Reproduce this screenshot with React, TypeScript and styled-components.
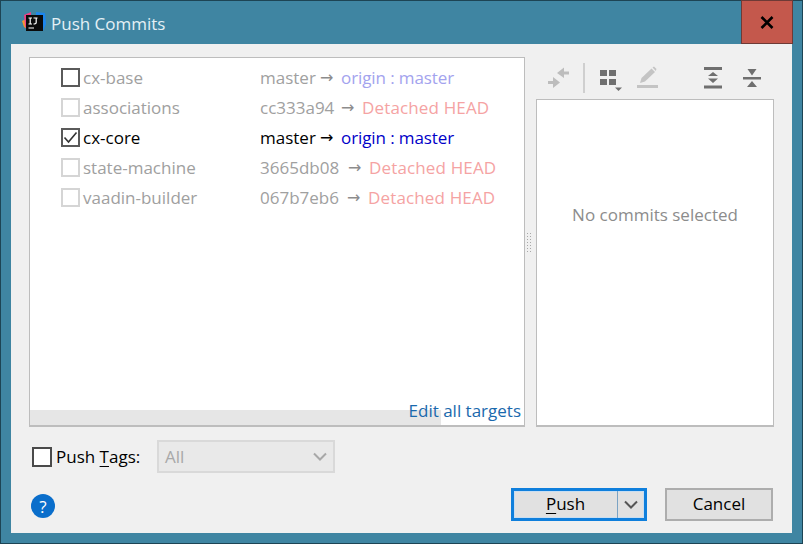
import styled, { createGlobalStyle } from "styled-components";

const GlobalStyle = createGlobalStyle`
    html, body {
        margin: 0;
        padding: 0;
        background: #3f85a2;
    }
    * {
        box-sizing: border-box;
    }
`;

const Dialog = styled.div`
    width: 803px;
    height: 544px;
    display: flex;
    flex-direction: column;
    background: #3f85a2;
    border: 1px solid #1d4454;
    font-family: "Open Sans", "Noto Sans", sans-serif;
    font-size: 17px;
    color: #000;
`;

const TitleBar = styled.div`
    height: 43px;
    display: flex;
    align-items: flex-start;
    padding-left: 21px;
    flex-shrink: 0;
`;

const AppIcon = styled.svg`
    width: 24px;
    height: 24px;
    margin-top: 11px;
    flex-shrink: 0;
`;

const Title = styled.div`
    margin-left: 5px;
    margin-top: 11px;
    color: #e4f0f5;
    font-size: 17px;
    line-height: 24px;
`;

const CloseButton = styled.div`
    width: 52px;
    height: 44px;
    margin-left: auto;
    margin-top: -1px;
    margin-right: 9px;
    background: #c4584c;
    border: 1px solid #6e3a36;
    display: flex;
    align-items: center;
    justify-content: center;
`;

const Content = styled.div`
    flex: 1;
    margin: 0 10px 10px;
    background: #f0f0f0;
    padding: 13px 18px 0;
    display: flex;
    flex-direction: column;
`;

const Split = styled.div`
    display: flex;
    height: 370px;
`;

const ListPanel = styled.div`
    width: 496px;
    background: #fff;
    border: 1px solid #bdbdbd;
    border-bottom-width: 2px;
    display: flex;
    flex-direction: column;
    position: relative;
    padding-top: 4px;
`;

const Row = styled.div`
    height: 30px;
    display: flex;
    align-items: center;
    padding-left: 31px;
    white-space: nowrap;
`;

const Check = styled.span<{ $state: "on" | "off" | "disabled" }>`
    width: 19px;
    height: 19px;
    flex-shrink: 0;
    background: #fff;
    border: 2px solid ${(p) => (p.$state === "disabled" ? "#d5d5d5" : "#5a5a5a")};
    display: flex;
    align-items: center;
    justify-content: center;
`;

const Name = styled.span<{ $active?: boolean }>`
    width: 177px;
    margin-left: 3px;
    color: ${(p) => (p.$active ? "#000" : "#a0a0a0")};
`;

const Branch = styled.span<{ $active?: boolean; $width: number }>`
    width: ${(p) => p.$width}px;
    color: ${(p) => (p.$active ? "#000" : "#a0a0a0")};
`;

const Arrow = styled.span<{ $active?: boolean }>`
    width: 27px;
    padding-left: 6px;
    font-family: "DejaVu Sans", sans-serif;
    font-size: 16px;
    color: ${(p) => (p.$active ? "#000" : "#8c8c8c")};
`;

const Remote = styled.span<{ $active?: boolean }>`
    letter-spacing: -0.1px;
    color: ${(p) => (p.$active ? "#0000c8" : "#a3a3ee")};
`;

const Detached = styled.span`
    letter-spacing: 0.15px;
    color: #f5a3a3;
`;

const Spacer = styled.div`
    flex: 1;
`;

const ScrollTrack = styled.div`
    height: 15px;
    width: 411px;
    background: #e6e6e6;
`;

const EditLink = styled.a`
    position: absolute;
    right: 3px;
    bottom: 2px;
    line-height: 24px;
    color: #1a69ad;
`;

const Divider = styled.div`
    width: 11px;
    display: flex;
    align-items: center;
    justify-content: center;
`;

const Grip = styled.div`
    width: 5px;
    height: 20px;
    margin-right: 5px;
    background-image: radial-gradient(#a8a8a8 0.8px, transparent 1px);
    background-size: 3px 3px;
`;

const SidePanel = styled.div`
    width: 238px;
    display: flex;
    flex-direction: column;
`;

const Toolbar = styled.div`
    height: 42px;
    display: flex;
    align-items: center;
    padding-left: 11px;
    flex-shrink: 0;
`;

const ToolIcon = styled.svg<{ $gap?: number }>`
    width: 26px;
    height: 26px;
    margin-left: ${(p) => p.$gap ?? 0}px;
    flex-shrink: 0;
`;

const ToolSep = styled.div`
    width: 2px;
    height: 30px;
    background: #cfcfcf;
    margin-left: 10px;
`;

const CommitsPane = styled.div`
    flex: 1;
    background: #fff;
    border: 1px solid #bdbdbd;
    border-bottom-width: 2px;
    display: flex;
    align-items: center;
    justify-content: center;
    padding-bottom: 97px;
    color: #8c8c8c;
`;

const TagsRow = styled.div`
    height: 33px;
    margin-top: 13px;
    display: flex;
    align-items: center;
    padding-left: 3px;
`;

const TagsCheck = styled.span`
    width: 20px;
    height: 20px;
    background: #fff;
    border: 2px solid #4a4a4a;
`;

const TagsLabel = styled.span`
    margin-left: 4px;
    width: 101px;
`;

const Mnemonic = styled.span`
    text-decoration: underline;
    text-underline-offset: 3px;
`;

const Select = styled.div`
    width: 178px;
    height: 33px;
    background: #e9e9e9;
    border: 2px solid #d9d9d9;
    color: #a8a8a8;
    display: flex;
    align-items: center;
    justify-content: space-between;
    padding: 0 5px 0 6px;
`;

const Footer = styled.div`
    margin-top: 15px;
    display: flex;
    align-items: flex-start;
    padding-left: 2px;
`;

const Help = styled.div`
    width: 24px;
    height: 24px;
    margin-top: 6px;
    border-radius: 50%;
    background: #0a6ecb;
    color: #fff;
    display: flex;
    align-items: center;
    justify-content: center;
    font-size: 17px;
`;

const SplitButton = styled.div`
    width: 136px;
    height: 33px;
    margin-left: auto;
    border: 3px solid #0f7fdc;
    background: #e1e1e1;
    box-shadow: inset 0 0 0 1px #c8def2;
    display: flex;
    align-items: center;
`;

const SplitMain = styled.div`
    flex: 1;
    text-align: center;
    padding-bottom: 3px;
`;

const SplitArrow = styled.div`
    width: 27px;
    height: 100%;
    border-left: 1px solid #7ba3c4;
    display: flex;
    align-items: center;
    justify-content: center;
`;

const CancelButton = styled.div`
    width: 108px;
    height: 33px;
    margin-left: 18px;
    margin-right: 1px;
    padding-bottom: 3px;
    background: #e1e1e1;
    border: 2px solid #adadad;
    display: flex;
    align-items: center;
    justify-content: center;
`;

const Chevron = ({ color }: { color: string }) => (
    <svg width="16" height="10" viewBox="0 0 16 10">
        <path d="M2 1.5 L8 7.5 L14 1.5" fill="none" stroke={color} strokeWidth="2" />
    </svg>
);

type Repo = {
    name: string;
    rev: string;
    revWidth: number;
    detached?: boolean;
    state: "on" | "off" | "disabled";
};

const repos: Repo[] = [
    { name: "cx-base", rev: "master", revWidth: 54, state: "off" },
    { name: "associations", rev: "cc333a94", revWidth: 75, detached: true, state: "disabled" },
    { name: "cx-core", rev: "master", revWidth: 54, state: "on" },
    { name: "state-machine", rev: "3665db08", revWidth: 82, detached: true, state: "disabled" },
    { name: "vaadin-builder", rev: "067b7eb6", revWidth: 81, detached: true, state: "disabled" },
];

export default function App() {
    return (
        <>
            <GlobalStyle />
            <Dialog>
                <TitleBar>
                    <AppIcon viewBox="0 0 24 24">
                        <path d="M0 9 L4 7 L5 17 L2 15 Z" fill="#f59a2c" />
                        <path d="M2 3 L9 0 L9 6 L5 19 L3 14 Z" fill="#ee3f86" />
                        <path d="M14 0 L23 1 L24 12 L21 19 L14 6 Z" fill="#1c86ee" />
                        <rect x="4" y="3" width="17" height="16" fill="#0a0a0a" />
                        <path d="M6.5 6 H10 M8.2 6 V12 M6.5 12 H10 M11.5 6 H15.5 M14.2 6 V10.5 Q14.2 12 11.5 12 M6.5 16 H12" stroke="#fff" strokeWidth="1.2" fill="none" />
                    </AppIcon>
                    <Title>Push Commits</Title>
                    <CloseButton>
                        <svg width="14" height="13" viewBox="0 0 14 13">
                            <path d="M1.5 1 L12.5 12 M12.5 1 L1.5 12" stroke="#000" strokeWidth="2.6" />
                        </svg>
                    </CloseButton>
                </TitleBar>
                <Content>
                    <Split>
                        <ListPanel>
                            {repos.map((r) => {
                                const active = r.state === "on";
                                return (
                                    <Row key={r.name}>
                                        <Check $state={r.state}>
                                            {active && (
                                                <svg width="15" height="13" viewBox="0 0 15 13">
                                                    <path d="M1.5 6.5 L5.5 11 L13.5 1.5" fill="none" stroke="#333" strokeWidth="1.6" />
                                                </svg>
                                            )}
                                        </Check>
                                        <Name $active={active}>{r.name}</Name>
                                        <Branch $active={active} $width={r.revWidth}>{r.rev}</Branch>
                                        <Arrow $active={active}>→</Arrow>
                                        {r.detached ? (
                                            <Detached>Detached HEAD</Detached>
                                        ) : (
                                            <Remote $active={active}>origin : master</Remote>
                                        )}
                                    </Row>
                                );
                            })}
                            <Spacer />
                            <ScrollTrack />
                            <EditLink>Edit all targets</EditLink>
                        </ListPanel>
                        <Divider>
                            <Grip />
                        </Divider>
                        <SidePanel>
                            <Toolbar>
                                <ToolIcon viewBox="0 0 26 26">
                                    <path d="M10 8 L17 2.5 V6.5 H22 V9.5 H17 V13 Z" fill="#bdbdbd" />
                                    <path d="M13 17.5 L6 12 V16 H1 V19 H6 V23 Z" fill="#bdbdbd" />
                                </ToolIcon>
                                <ToolSep />
                                <ToolIcon $gap={13} viewBox="0 0 26 26">
                                    <path d="M2 5 H9 V11 H2 Z M11 5 H18 V11 H11 Z M2 14 H9 V20 H2 Z M11 14 H18 V20 H11 Z" fill="#6f6f6f" />
                                    <path d="M17 22.5 H24 L20.5 26 Z" fill="#6f6f6f" />
                                </ToolIcon>
                                <ToolIcon $gap={12} viewBox="0 0 26 26">
                                    <path d="M4 18 L5.5 13 L15.5 3.5 L19 7 L9 16.5 Z" fill="#c4c4c4" />
                                    <path d="M16.5 2.5 L18 1.5 L20.5 4 L19.8 6 Z" fill="#c4c4c4" />
                                    <rect x="1" y="20" width="21" height="3" fill="#c4c4c4" />
                                </ToolIcon>
                                <ToolIcon $gap={38} viewBox="0 0 26 26">
                                    <path d="M4 2 H22 V5 H4 Z M4 20.5 H22 V23.5 H4 Z" fill="#6f6f6f" />
                                    <path d="M13 7 L18 11 H8 Z M13 18 L18 13.5 H8 Z" fill="#6f6f6f" />
                                </ToolIcon>
                                <ToolIcon $gap={13} viewBox="0 0 26 26">
                                    <path d="M4 12 H22 V14.5 H4 Z" fill="#6f6f6f" />
                                    <path d="M13 10.5 L8.5 4 H17.5 Z M13 16 L8 22 H18 Z" fill="#6f6f6f" />
                                </ToolIcon>
                            </Toolbar>
                            <CommitsPane>No commits selected</CommitsPane>
                        </SidePanel>
                    </Split>
                    <TagsRow>
                        <TagsCheck />
                        <TagsLabel>
                            Push <Mnemonic>T</Mnemonic>ags:
                        </TagsLabel>
                        <Select>
                            All
                            <Chevron color="#a8a8a8" />
                        </Select>
                    </TagsRow>
                    <Footer>
                        <Help>?</Help>
                        <SplitButton>
                            <SplitMain>
                                <Mnemonic>P</Mnemonic>ush
                            </SplitMain>
                            <SplitArrow>
                                <Chevron color="#555" />
                            </SplitArrow>
                        </SplitButton>
                        <CancelButton>Cancel</CancelButton>
                    </Footer>
                </Content>
            </Dialog>
        </>
    );
}
